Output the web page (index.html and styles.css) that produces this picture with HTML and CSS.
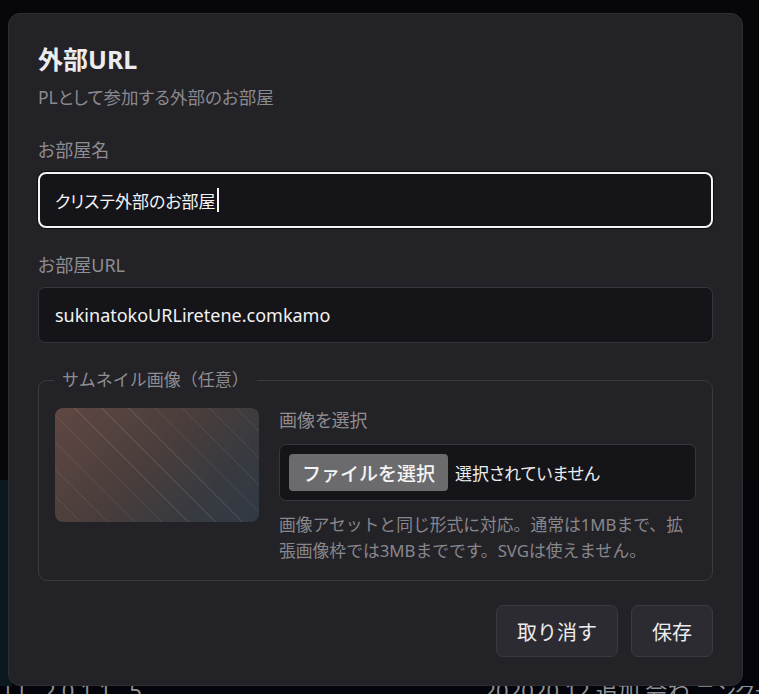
FILE: index.html
```html
<!DOCTYPE html>
<html lang="ja">
<head>
<meta charset="utf-8">
<title>外部URL</title>
<link rel="stylesheet" href="styles.css">
</head>
<body>
<div class="page">
  <div class="page-top"></div>
  <div class="page-bottom">
    <div class="side-strip"></div>
    <div class="page-text">
      <span class="pt-left">ロ 2011 5</span>
      <span class="pt-right">202020 12 追加 会わ ニング追加</span>
    </div>
  </div>
</div>

<div class="overlay">
  <div class="modal" role="dialog" aria-labelledby="dlg-title">
    <h1 class="title" id="dlg-title">外部URL</h1>
    <p class="subtitle">PLとして参加する外部のお部屋</p>

    <div class="label">お部屋名</div>
    <div class="field focused"><span class="jp">クリステ外部のお部屋</span><span class="caret"></span></div>

    <div class="label">お部屋URL</div>
    <div class="field"><span>sukinatokoURLiretene.comkamo</span></div>

    <fieldset class="thumb-set">
      <legend>サムネイル画像（任意）</legend>
      <div class="thumb-row">
        <div class="thumb"></div>
        <div class="thumb-side">
          <div class="side-label">画像を選択</div>
          <div class="file-box">
            <span class="file-btn">ファイルを選択</span>
            <span class="file-name">選択されていません</span>
          </div>
          <p class="help">画像アセットと同じ形式に対応。通常は1MBまで、拡張画像枠では3MBまでです。SVGは使えません。</p>
        </div>
      </div>
    </fieldset>

    <div class="actions">
      <button class="btn">取り消す</button>
      <button class="btn">保存</button>
    </div>
  </div>
</div>
</body>
</html>
```

FILE: styles.css
```css
* { box-sizing: border-box; }

html, body {
  margin: 0;
  height: 100%;
}

body {
  background: #060608;
  font-family: "Noto Sans", "Noto Sans CJK JP", sans-serif;
  font-feature-settings: "palt";
  color: #ececee;
  overflow: hidden;
}

.page {
  height: 100%;
  display: grid;
  grid-template-rows: 480px 1fr;
}

.page-top {
  background: #070709;
}

.page-bottom {
  background: #03050a;
  display: flex;
  flex-direction: column;
  justify-content: flex-end;
}

.side-strip {
  flex: 1;
  width: 12px;
  background: #0b181d;
}

.page-text {
  height: 8px;
  display: flex;
  justify-content: space-between;
  overflow: hidden;
  font-size: 22px;
  line-height: 8px;
  color: #8f9296;
  padding: 0 0 0 4px;
}

.pt-left { letter-spacing: 6px; }
.pt-right { margin-right: -40px; }

.overlay {
  position: fixed;
  inset: 0;
  padding: 13px 0 0 8px;
}

.modal {
  width: 735px;
  height: 673px;
  background: #232227;
  border: 1px solid #2f2e33;
  border-radius: 12px;
  padding: 29px 29px 28px 29px;
  display: flex;
  flex-direction: column;
}

.title {
  margin: 0;
  font-size: 25px;
  line-height: 32px;
  font-weight: 700;
  color: #ececee;
}

.subtitle {
  margin: 10px 0 0;
  font-size: 17.5px;
  line-height: 24px;
  color: #8a898e;
}

.label {
  margin-top: 28px;
  font-size: 18px;
  line-height: 26px;
  color: #8e8d92;
}

.field + .label {
  margin-top: 24px;
}

.field {
  margin-top: 9px;
  height: 56px;
  background: #151418;
  border: 1px solid #37363c;
  border-radius: 7px;
  display: flex;
  align-items: center;
  padding: 0 16px;
  font-size: 18px;
  color: #f2f2f4;
}

.field .jp {
  font-size: 17px;
}

.field.focused {
  border: 2px solid #f4f4f6;
  border-radius: 8px;
  padding: 0 15px;
  box-shadow: 0 0 0 1px #0d0d10;
}

.caret {
  width: 2px;
  height: 24px;
  background: #f4f4f6;
  margin-left: 1px;
}

.thumb-set {
  margin: 24px 0 0;
  border: 1px solid #3a393e;
  border-radius: 9px;
  padding: 15px 16px 16px 16px;
  min-width: 0;
}

.thumb-set legend {
  padding: 0 8px;
  margin-left: -1px;
  font-size: 17px;
  line-height: 26px;
  font-feature-settings: normal;
  color: #8e8d92;
}

.thumb-row {
  display: flex;
  gap: 20px;
  align-items: flex-start;
}

.thumb {
  flex: 0 0 204px;
  height: 114px;
  border-radius: 8px;
  background:
    repeating-linear-gradient(45deg, rgba(255,255,255,0) 0 18px, rgba(255,255,255,0.08) 18px 19px),
    linear-gradient(135deg, #604741 0%, #4a3e3c 45%, #383a40 75%, #313943 100%);
}

.thumb-side {
  flex: 1;
  min-width: 0;
}

.side-label {
  font-size: 18px;
  line-height: 24px;
  color: #8e8d92;
}

.file-box {
  margin-top: 12px;
  height: 57px;
  background: #151418;
  border: 1px solid #37363c;
  border-radius: 7px;
  padding: 9px;
  display: flex;
  align-items: center;
  gap: 7px;
}

.file-btn {
  height: 37px;
  padding: 0 13px;
  background: #6b6b6d;
  border-radius: 4px;
  display: flex;
  align-items: center;
  font-size: 19px;
  font-weight: 500;
  font-feature-settings: normal;
  color: #f4f4f4;
}

.file-name {
  font-size: 17px;
  color: #ececee;
}

.help {
  margin: 11px 0 0;
  font-size: 16.8px;
  line-height: 26px;
  font-feature-settings: normal;
  color: #88878c;
}

.actions {
  margin-top: 24px;
  display: flex;
  justify-content: flex-end;
  gap: 13px;
}

.btn {
  height: 52px;
  padding: 0 20px;
  background: #2c2b31;
  border: 1px solid #3a393f;
  border-radius: 7px;
  font-family: inherit;
  font-feature-settings: normal;
  font-size: 20px;
  color: #ececee;
  cursor: pointer;
}
```
